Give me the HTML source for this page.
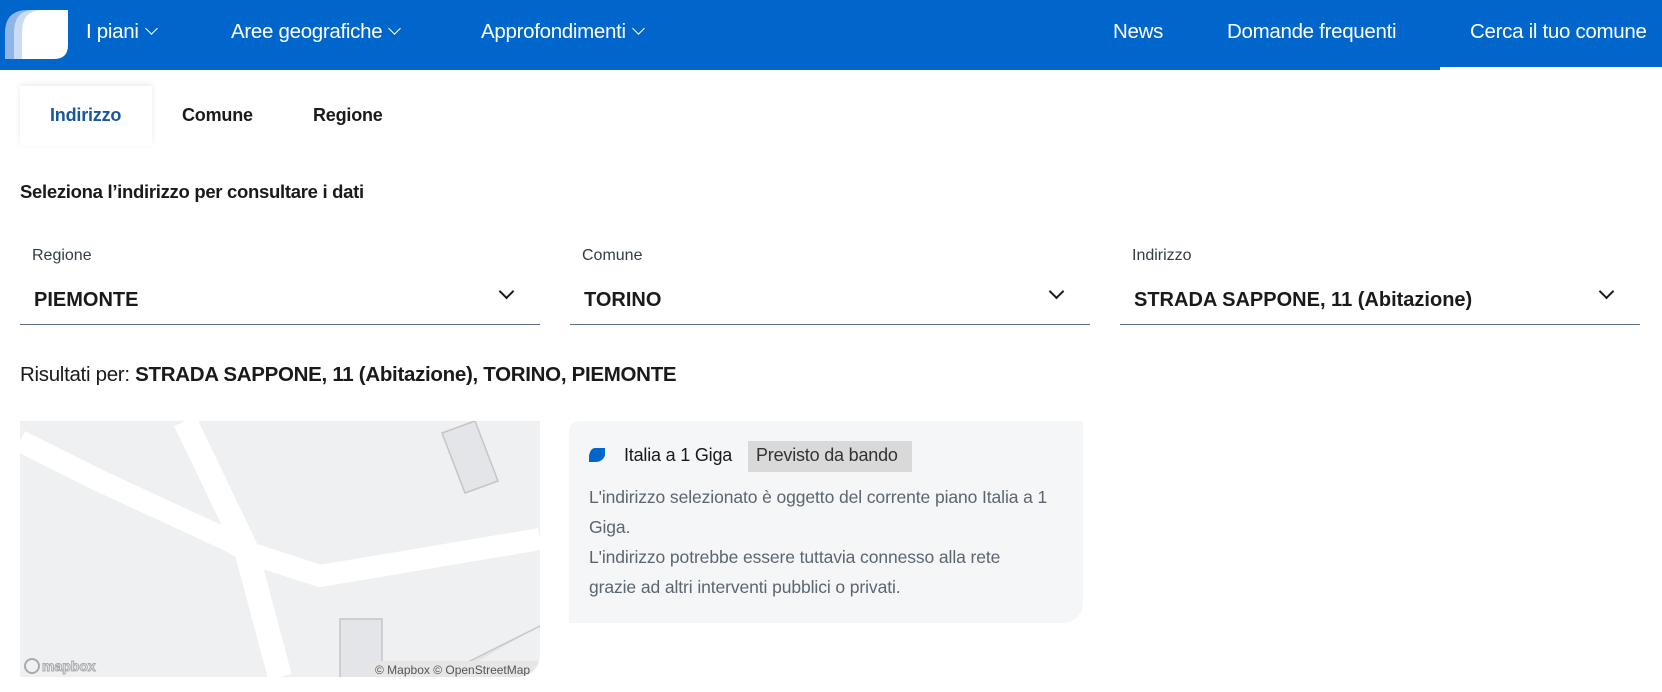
<!DOCTYPE html>
<html><head><meta charset="utf-8"><style>
*{margin:0;padding:0;box-sizing:border-box}
body{width:1662px;height:692px;overflow:hidden;background:#fff;font-family:"Liberation Sans",sans-serif;color:#1a1a1a;position:relative}
.hdr{position:absolute;left:0;top:0;width:1662px;height:70px;background:#0066cc}
.hdr2{position:absolute;left:1440px;top:67px;width:222px;height:3px;background:#fff}
.nav{position:absolute;top:20px;color:#fff;font-size:20.5px;letter-spacing:-0.3px}
.chev{display:inline-block;width:9px;height:9px;border-right:1.3px solid #fff;border-bottom:1.3px solid #fff;transform:rotate(45deg);margin-left:8px;position:relative;top:-5px}
.tab{position:absolute;top:105px;font-size:18px;font-weight:bold;letter-spacing:-0.2px}
.abs{position:absolute}
.lbl{font-size:16px;color:#333d47;top:247px}
.val{font-size:20px;font-weight:bold;top:289px}
.line{height:1px;background:#5c6f82;top:324px}
.dd{width:11px;height:11px;border-right:2px solid #1a1a1a;border-bottom:2px solid #1a1a1a;transform:rotate(45deg);top:286px}
</style></head><body>
<div class="hdr"></div><div class="hdr2"></div>
<svg class="abs" style="left:4px;top:9px" width="64" height="51" viewBox="0 0 64 51">
<path d="M24 1 H52 V40 Q52 50 42 50 H1 V24 Q1 1 24 1Z" fill="#8fb6e6"/>
<path d="M30 1 H58 V40 Q58 50 48 50 H10 V24 Q10 1 30 1Z" fill="#c9dcf3"/>
<path d="M38 1 H64 V36 Q64 50 50 50 H18 V24 Q18 1 38 1Z" fill="#fff"/>
</svg>
<div class="nav" style="left:86px">I piani<span class="chev"></span></div>
<div class="nav" style="left:231px">Aree geografiche<span class="chev"></span></div>
<div class="nav" style="left:481px">Approfondimenti<span class="chev"></span></div>
<div class="nav" style="left:1113px">News</div>
<div class="nav" style="left:1227px">Domande frequenti</div>
<div class="nav" style="left:1470px">Cerca il tuo comune</div>

<div class="abs" style="left:20px;top:86px;width:132px;height:60px;background:#fff;box-shadow:0 -2px 6px rgba(0,0,0,0.08)"></div>
<div class="tab" style="left:50px;color:#17579e">Indirizzo</div>
<div class="tab" style="left:182px">Comune</div>
<div class="tab" style="left:313px">Regione</div>

<div class="abs" style="left:20px;top:181px;font-size:18.5px;font-weight:bold;letter-spacing:-0.3px">Seleziona l’indirizzo per consultare i dati</div>

<div class="abs lbl" style="left:32px">Regione</div>
<div class="abs val" style="left:34px">PIEMONTE</div>
<div class="abs dd" style="left:501px"></div>
<div class="abs line" style="left:20px;width:520px"></div>
<div class="abs lbl" style="left:582px">Comune</div>
<div class="abs val" style="left:584px">TORINO</div>
<div class="abs dd" style="left:1051px"></div>
<div class="abs line" style="left:570px;width:520px"></div>
<div class="abs lbl" style="left:1132px">Indirizzo</div>
<div class="abs val" style="left:1134px">STRADA SAPPONE, 11 (Abitazione)</div>
<div class="abs dd" style="left:1601px"></div>
<div class="abs line" style="left:1120px;width:520px"></div>

<div class="abs" style="left:20px;top:363px;font-size:20.5px;letter-spacing:-0.3px">Risultati per: <b>STRADA SAPPONE, 11 (Abitazione), TORINO, PIEMONTE</b></div>

<div class="abs" style="left:20px;top:421px;width:520px;height:256px;background:#eff0f1;border-bottom-right-radius:22px;overflow:hidden">
<svg width="520" height="256" viewBox="0 0 520 256">
<polyline points="0,20 80,60 210,120 232,133 300,155 520,118" fill="none" stroke="#fff" stroke-width="22"/>
<polyline points="165,0 225,125 260,256" fill="none" stroke="#fff" stroke-width="24"/>
<polygon points="422,12 455,0 478,60 445,72" fill="#e4e5e8" stroke="#c5c5c5" stroke-width="1.5"/>
<rect x="320" y="198" width="42" height="70" fill="#e4e5e8" stroke="#c5c5c5" stroke-width="1.5"/>
<path d="M430 256 L450 240 L520 205" fill="#e4e5e8" stroke="#c8c8c8" stroke-width="1.5"/>
<rect x="350" y="240" width="170" height="16" fill="#e6e6e6"/>
<text x="355" y="253" font-size="12" fill="#555" font-family="Liberation Sans">© Mapbox © OpenStreetMap</text>
<circle cx="12" cy="245" r="7" fill="none" stroke="#aaa" stroke-width="2"/>
<text x="22" y="250" font-size="14" font-weight="bold" fill="none" stroke="#aaa" stroke-width="1" font-family="Liberation Sans">mapbox</text>
</svg></div>

<div class="abs" style="left:569px;top:421px;width:514px;height:202px;background:#f5f6f7;border-radius:0 0 20px 0;border-top-left-radius:10px"></div>
<svg class="abs" style="left:589px;top:448px" width="16" height="14" viewBox="0 0 16 14"><path d="M4 0 H16 V6 Q16 14 8 14 H0 V6 Q0 0 4 0Z" fill="#0066cc" transform="skewX(-15) translate(2 0)"/></svg>
<div class="abs" style="left:624px;top:445px;font-size:18px;letter-spacing:-0.2px">Italia a 1 Giga</div>
<div class="abs" style="left:748px;top:441px;width:164px;height:31px;background:#d9d9d9;font-size:18px;color:#333;padding:4px 0 0 8px;letter-spacing:-0.2px">Previsto da bando</div>
<div class="abs" style="left:589px;top:482px;width:462px;font-size:17.5px;line-height:30px;color:#5c6670;letter-spacing:-0.1px">L'indirizzo selezionato è oggetto del corrente piano Italia a 1 Giga.<br>L'indirizzo potrebbe essere tuttavia connesso alla rete grazie ad altri interventi pubblici o privati.</div>
</body></html>
